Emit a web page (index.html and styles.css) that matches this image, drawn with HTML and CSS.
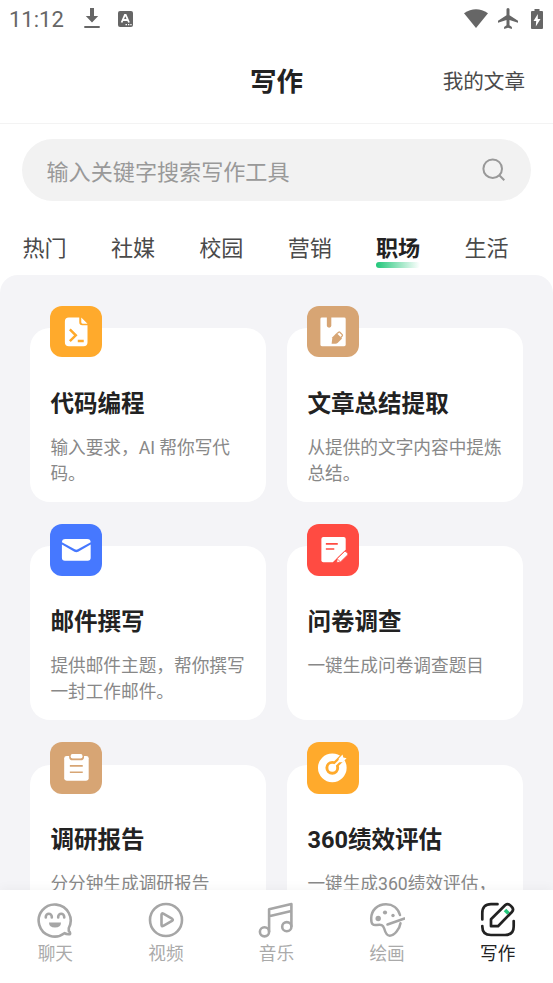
FILE: index.html
```html
<!DOCTYPE html>
<html lang="zh-CN">
<head>
<meta charset="utf-8">
<meta name="viewport" content="width=device-width, initial-scale=1">
<title>写作</title>
<link rel="stylesheet" href="styles.css">
</head>
<body>
<div class="app">
  <div class="status">
    <span class="clock">11:12</span>
    <svg class="st-download" width="16" height="21" viewBox="0 0 16 21"><path d="M6 0h4v8h4.200L8 14.500 1.800 8H6zM.3 18h15.400v2H.3z"/></svg>
    <svg class="st-lang" width="15" height="16" viewBox="0 0 15 16"><rect width="15" height="16" rx="2"/><path d="M3.600 11.500 6.900 3.800h.8L11 11.500M4.900 9h4.800" fill="none" stroke="#fff" stroke-width="1.800"/><path d="M7.500 13.600h1.500m1 0h1.300m1 0h1.300" stroke="#fff" stroke-width="1.300"/></svg>
    <span class="spacer"></span>
    <svg width="24" height="19" viewBox="0 0 24 19"><path d="M0 4.300Q12-4 24 4.300L12 19z"/></svg>
    <svg class="st-plane" width="20" height="21" viewBox="0 0 20 21"><path d="M10 0c1 0 1.500.9 1.500 1.700v5.600l8.500 5.400v2l-8.500-2.600v5.200l2.400 1.700V21L10 19.700 6.100 21v-2l2.400-1.700v-5.200L0 14.700v-2l8.500-5.400V1.700C8.500.9 9 0 10 0z"/></svg>
    <svg class="st-battery" width="12" height="20" viewBox="0 0 12 20"><path d="M3.500 0h5v2H11q1 0 1 1v16q0 1-1 1H1q-1 0-1-1V3q0-1 1-1h2.500z"/><path d="M6.800 5 2.500 12h2.700L4.800 17.500 9.500 10H6.800z" fill="#fff"/></svg>
  </div>

  <header class="header">
    <h1>写作</h1>
    <a class="mine">我的文章</a>
  </header>

  <div class="search">
    <span>输入关键字搜索写作工具</span>
    <svg width="24" height="24" viewBox="0 0 24 24" fill="none" stroke="#999" stroke-width="2"><circle cx="10.700" cy="10.700" r="9.300"/><path d="m17.300 17.300 5 5"/></svg>
  </div>

  <nav class="tabs">
    <span class="tab">热门</span>
    <span class="tab">社媒</span>
    <span class="tab">校园</span>
    <span class="tab">营销</span>
    <span class="tab active">职场</span>
    <span class="tab">生活</span>
  </nav>

  <main class="panel">
    <article class="card">
      <div class="icon orange"><svg viewBox="0 0 52 52"><path fill="#fff" d="M19 11.500h10.500v5q0 3 3 3h5.300V36.500q0 4-4 4H19q-4 0-4-4v-21q0-4 4-4zM31.500 11.500l6.300 6.300h-4.800q-1.500 0-1.500-1.500z"/><path d="m20 23.500 6 6-6 6M28 35.300h6" fill="none" stroke="#ffaa2c" stroke-width="2.500"/></svg></div>
      <h2>代码编程</h2>
      <p>输入要求，AI 帮你写代码。</p>
    </article>
    <article class="card">
      <div class="icon tan"><svg viewBox="0 0 52 52"><path fill="#fff" d="M15 11.500h5v8.300q0 1.500 2.300 2 2.200-.5 2.200-2v-8.300H37.500q1.500 0 1.500 1.500v26q0 1.500-1.500 1.500H15q-1.500 0-1.500-1.500V13q0-1.500 1.500-1.500z"/><path fill="#d7a574" d="m24.800 38 .8-6.500 4.200-4.200 5.500 5.500-4.200 4.200q-1 1-2.500 1z"/><path fill="none" stroke="#d7a574" stroke-width="1.300" d="m30.300 27.800 1.600-1.400q.6-.5 1.200 0l2.400 2.400q.5.700 0 1.300l-1.400 1.600"/></svg></div>
      <h2>文章总结提取</h2>
      <p>从提供的文字内容中提炼总结。</p>
    </article>
    <article class="card">
      <div class="icon blue"><svg viewBox="0 0 52 52"><path fill="#fff" d="M12 18.500q0-3.500 3.500-3.500h22q3.500 0 3.500 3.500l-13 7q-1.500.7-3 0z"/><path fill="#fff" d="m12 20.700 12.600 7.200q1.900.9 3.800 0L41 20.700V34q0 3-3 3H15q-3 0-3-3z"/></svg></div>
      <h2>邮件撰写</h2>
      <p>提供邮件主题，帮你撰写一封工作邮件。</p>
    </article>
    <article class="card">
      <div class="icon red"><svg viewBox="0 0 52 52"><path fill="#fff" d="M16.500 13h20.500q2 0 2 2v11L26 38.500h-9.500q-2 0-2-2V15q0-2 2-2z"/><path d="M19 20h12M19 25.200h8.500" stroke="#ff4b42" stroke-width="1.700"/><path fill="#fff" stroke="#ff4b42" stroke-width="1" d="m29.800 39.200.6-4.400 7.200-7q.9-.7 1.700 0l1.700 1.700q.7.900 0 1.700l-7.100 7z"/><path d="m31 35.500 2.400 2.500" stroke="#ff4b42" stroke-width=".8"/></svg></div>
      <h2>问卷调查</h2>
      <p>一键生成问卷调查题目</p>
    </article>
    <article class="card">
      <div class="icon tan"><svg viewBox="0 0 52 52"><rect x="14.300" y="14" width="24.700" height="25" rx="2.500" fill="#fff"/><rect x="20.300" y="11.500" width="13" height="6" rx="2.500" fill="#fff" stroke="#d7a574" stroke-width="2"/><rect x="20.800" y="12" width="12" height="4.500" rx="2" fill="#fff"/><path d="M20 24h13M20 30.500h13" stroke="#d7a574" stroke-width="1.700"/></svg></div>
      <h2>调研报告</h2>
      <p>分分钟生成调研报告</p>
    </article>
    <article class="card">
      <div class="icon orange"><svg viewBox="0 0 52 52"><circle cx="25.500" cy="26" r="10.700" fill="none" stroke="#fff" stroke-width="7.500"/><path d="m28 23.500 10-10" stroke="#ffaa2c" stroke-width="6.500"/><circle cx="25.500" cy="26" r="4" fill="#fff"/><path d="m26 25.500 9-9" stroke="#fff" stroke-width="2"/><path fill="#fff" d="m32 16.700 3.800-4 .8 3 3.300.6-4 4.200h-3.900z"/></svg></div>
      <h2>360绩效评估</h2>
      <p>一键生成360绩效评估，</p>
    </article>
  </main>

  <nav class="bottom">
    <div class="item">
      <svg viewBox="0 0 36 36" fill="none" stroke="#a6a6a6" stroke-width="2.600" stroke-linecap="round"><path d="M31.800 26A16 16 0 1 0 27.400 31.200Q29.500 32.600 33 32.100 33.500 30.500 31.800 29z" stroke-linejoin="round"/><path d="M8.800 15.500v-.7a3 3 0 0 1 6 0v.7M21.200 15.500v-.7a3 3 0 0 1 6 0v.7"/><path d="M12 20.500h12q0 5-6 5t-6-5z" fill="#a6a6a6" stroke="none"/></svg>
      <span>聊天</span>
    </div>
    <div class="item">
      <svg viewBox="0 0 36 36" fill="none" stroke="#a6a6a6" stroke-width="2.600" stroke-linejoin="round"><circle cx="18" cy="18" r="16"/><path d="M13.500 12.800q0-2 1.800-1.100l8.700 5q1.600 1.100 0 2.200l-8.700 5q-1.800.9-1.800-1.100z"/></svg>
      <span>视频</span>
    </div>
    <div class="item">
      <svg viewBox="0 0 36 36" fill="none" stroke="#a6a6a6" stroke-width="2.600" stroke-linejoin="round"><circle cx="6.500" cy="29.800" r="4.600"/><circle cx="28.800" cy="24.700" r="4.600"/><path d="M11.100 29.800V7.300L33.400 2v22.700M11.100 14.300 33.400 9"/></svg>
      <span>音乐</span>
    </div>
    <div class="item">
      <svg viewBox="0 0 36 36" fill="none" stroke="#a6a6a6" stroke-width="2.500" stroke-linecap="round" stroke-linejoin="round"><path d="M31 13C29 6 23.500 2.200 17 2.200 8.500 2.200 2.200 8.200 2.200 16.500c0 6 1.800 7 5.500 6.500 4.500-.6 6.300-.4 7.500 3.500 1.200 4.500 2.300 7.200 5.500 7.200 4.800 0 10-7 10.800-12.500"/><path d="m18.500 22.500 17-6"/><g fill="#a6a6a6" stroke="none"><circle cx="9.200" cy="16.500" r="2.700"/><circle cx="16" cy="10.500" r="2.100"/><circle cx="24" cy="13.500" r="1.700"/></g></svg>
      <span>绘画</span>
    </div>
    <div class="item current">
      <svg viewBox="0 0 36 36" fill="none" stroke="#222" stroke-width="2.700" stroke-linecap="round" stroke-linejoin="round"><path d="M17.500 2.200H11Q2.300 2.200 2.300 11v6.500M2.300 24v.500Q2.300 33 11 33h14q8.700 0 8.700-8.500V19"/><path d="m25 8 3.500 3.500" stroke="#22c77a" stroke-width="3.600" stroke-linecap="butt"/><path d="M11 24.200v-7L25.300 3q2.500-2 5 .4l1.600 1.600q2.300 2.500 0 5L18 24.200z"/></svg>
      <span>写作</span>
    </div>
  </nav>
</div>
</body>
</html>
```
FILE: styles.css
```css
* { box-sizing: border-box; }

body {
  margin: 0;
  background: #fff;
  color: #222;
  font-family: Roboto, "Noto Sans CJK SC", sans-serif;
}

.app {
  height: 983px;
  display: flex;
  flex-direction: column;
  overflow: hidden;
}

svg { display: block; flex: none; }
h1, h2, p { margin: 0; }

.status {
  height: 37px;
  flex: none;
  display: flex;
  align-items: center;
  padding: 0 10px 0 9px;
  color: #666;
  fill: #666;
}
.clock { font-size: 22px; line-height: 37px; padding-top: 2px; }
.st-download { margin-left: 20px; }
.st-lang { margin-left: 18px; }
.spacer { flex: 1; }
.st-plane { margin-left: 10px; }
.st-battery { margin-left: 13px; }

.header {
  height: 87px;
  flex: none;
  display: grid;
  grid-template-columns: 1fr auto 1fr;
  align-items: center;
  padding: 3px 28px 0;
  border-bottom: 1px solid #f3f3f3;
}
.header h1 { grid-column: 2; font-size: 26.5px; font-weight: 700; line-height: 36px; }
.mine { justify-self: end; font-size: 20.6px; color: #4a4a4a; line-height: 30px; padding-top: 1px; }

.search {
  height: 62px;
  flex: none;
  margin: 15px 22px 0;
  padding: 0 25px 0 24.5px;
  border-radius: 31px;
  background: #f2f2f2;
  display: flex;
  align-items: center;
  justify-content: space-between;
  color: #999;
  font-size: 22.1px;
}

.tabs {
  height: 74px;
  flex: none;
  display: flex;
  gap: 44.2px;
  padding: 31px 22px 0 22.5px;
  font-size: 22.1px;
  line-height: 33px;
  color: #4a4a4a;
  white-space: nowrap;
}
.tab { width: 44.2px; flex: none; }
.tab.active { color: #222; font-weight: 700; }
.tab.active::after {
  content: "";
  display: block;
  height: 6px;
  margin-top: -3px;
  border-radius: 3px;
  background: linear-gradient(90deg, #22c77a, #fff);
}

.panel {
  flex: 1;
  min-height: 0;
  overflow: hidden;
  background: #f4f4f7;
  border-radius: 18px 18px 0 0;
  padding: 53px 30px 0;
  display: grid;
  grid-template-columns: 236px 236px;
  grid-auto-rows: 174px;
  gap: 44.3px 21px;
  align-content: start;
}
.card {
  background: #fff;
  border-radius: 20px;
  padding: 0 20px 0 20.4px;
}
.icon {
  width: 51.6px;
  height: 51.6px;
  margin-top: -22.4px;
  margin-left: -0.4px;
  border-radius: 12px;
}
.orange { background: #ffaa2c; }
.tan { background: #d7a574; }
.blue { background: #4678ff; }
.red { background: #ff4b42; }
.card h2 {
  margin-top: 29.3px;
  font-size: 23.56px;
  font-weight: 700;
  line-height: 35px;
  white-space: nowrap;
}
.card p {
  margin-top: 13.2px;
  font-size: 17.67px;
  line-height: 26.5px;
  color: #888;
}

.bottom {
  position: relative;
  height: 93.5px;
  flex: none;
  background: #fff;
  box-shadow: 0 -2px 10px rgba(0, 0, 0, 0.04);
  display: grid;
  grid-template-columns: repeat(5, 1fr);
  padding-top: 12px;
}
.item {
  display: flex;
  flex-direction: column;
  align-items: center;
  font-size: 17.67px;
  line-height: 26px;
  color: #aaa;
}
.item svg { width: 36px; height: 36px; margin-bottom: 3.5px; }
.item.current { color: #222; }
```
